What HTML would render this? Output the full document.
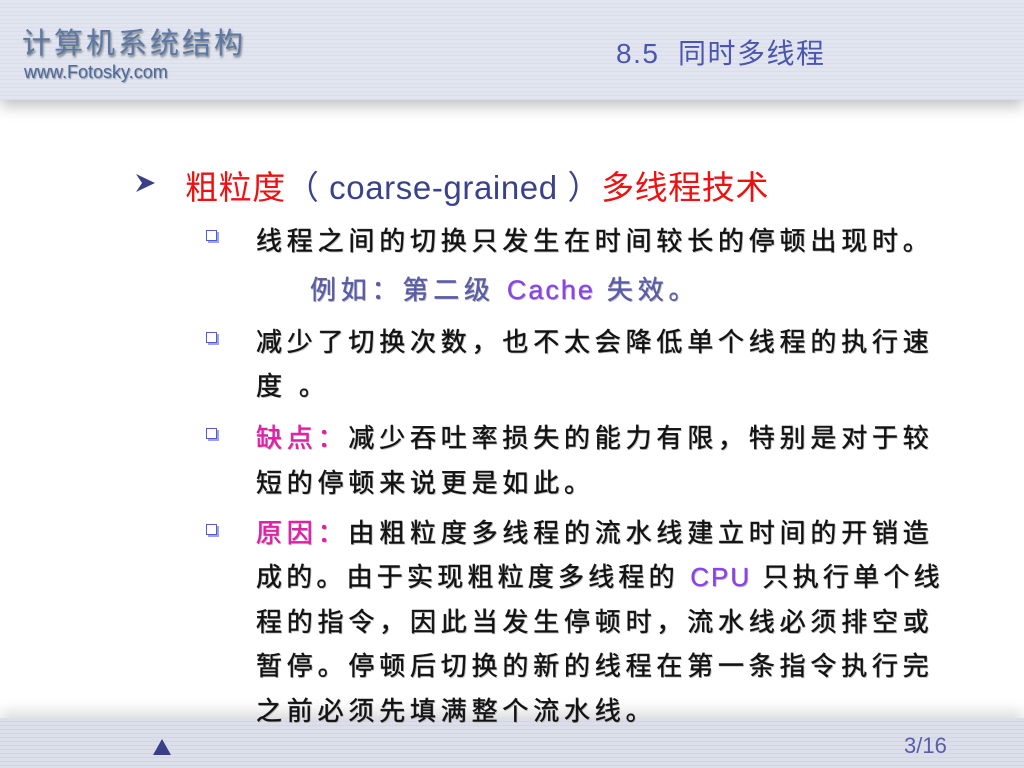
<!DOCTYPE html>
<html><head><meta charset="utf-8"><style>
body{margin:0;width:1024px;height:768px;overflow:hidden;background:#fff;position:relative;font-family:"Liberation Sans","Noto Sans CJK SC",sans-serif}
.hdr{position:absolute;left:0;top:0;width:1024px;height:100px;background:repeating-linear-gradient(#e2e5f0 0 3px,#dadeeb 3px 4px);box-shadow:0 6px 14px rgba(0,0,0,.25)}
.ftr{position:absolute;left:0;top:718px;width:1024px;height:50px;background:repeating-linear-gradient(#dcdfea 0 3px,#d2d6e4 3px 4px);box-shadow:0 -6px 14px rgba(0,0,0,.15)}
.a{position:absolute;white-space:nowrap}
.l{position:absolute;left:256px;font-size:26px;letter-spacing:4.8px;color:#111;-webkit-text-stroke:0.5px #222;text-shadow:1px 1px 0 #bbb;white-space:nowrap;line-height:30px}
.b{position:absolute;left:206px;width:9px;height:9px;border:1.5px solid #4a5cd8;background:#fff;box-shadow:2px 2px 0 #9aa4e8}
.p{color:#e020a8;-webkit-text-stroke:0.5px #e020a8}
.pu{color:#8a44e6;-webkit-text-stroke:0.3px #8a44e6;letter-spacing:2px}
</style></head><body>
<div class="hdr"></div>
<div class="a" style="left:22px;top:20px;font-size:29px;letter-spacing:3px;color:#5a78a8;text-shadow:1px 2px 2px #777">计算机系统结构</div>
<div class="a" style="left:24px;top:62px;font-size:18px;color:#4a6aa0;text-shadow:1px 1px 1px #999">www.Fotosky.com</div>
<div class="a" style="left:616px;top:32px;font-size:28px;letter-spacing:1.5px;color:#4a56b0">8.5&nbsp; 同时多线程</div>
<svg class="a" style="left:135px;top:172px" width="22" height="22" viewBox="0 0 22 22"><path d="M1 2 L20 11 L1 20 L7 11 Z" fill="#3a3f8a"/></svg>
<div class="a" style="left:185px;top:161px;font-size:33px;letter-spacing:0.6px;color:#ee1111">粗粒度<span style="color:#3a428c">（ coarse-grained ）</span>多线程技术</div>
<div class="b" style="top:230px"></div>
<div class="l" style="top:226px">线程之间的切换只发生在时间较长的停顿出现时。</div>
<div class="l" style="top:275px;left:310px;color:#5a5ca8;-webkit-text-stroke:0.4px #5a5ca8">例如：第二级 <span class="pu" style="font-size:27px">Cache</span> 失效。</div>
<div class="b" style="top:332px"></div>
<div class="l" style="top:327px">减少了切换次数，也不太会降低单个线程的执行速</div>
<div class="l" style="top:371px">度 。</div>
<div class="b" style="top:428px"></div>
<div class="l" style="top:423px"><span class="p">缺点：</span>减少吞吐率损失的能力有限，特别是对于较</div>
<div class="l" style="top:468px">短的停顿来说更是如此。</div>
<div class="b" style="top:524px"></div>
<div class="l" style="top:518px"><span class="p">原因：</span>由粗粒度多线程的流水线建立时间的开销造</div>
<div class="l" style="top:562px;letter-spacing:4.2px">成的。由于实现粗粒度多线程的 <span class="pu">CPU</span> 只执行单个线</div>
<div class="l" style="top:607px">程的指令，因此当发生停顿时，流水线必须排空或</div>
<div class="l" style="top:651px">暂停。停顿后切换的新的线程在第一条指令执行完</div>
<div class="ftr"></div>
<div class="l" style="top:696px">之前必须先填满整个流水线。</div>
<svg class="a" style="left:152px;top:738px" width="20" height="18"><path d="M10 1 L19 17 L1 17 Z" fill="#3a3f8a"/></svg>
<div class="a" style="left:904px;top:733px;font-size:22px;color:#5a5ea8">3/16</div>
</body></html>
